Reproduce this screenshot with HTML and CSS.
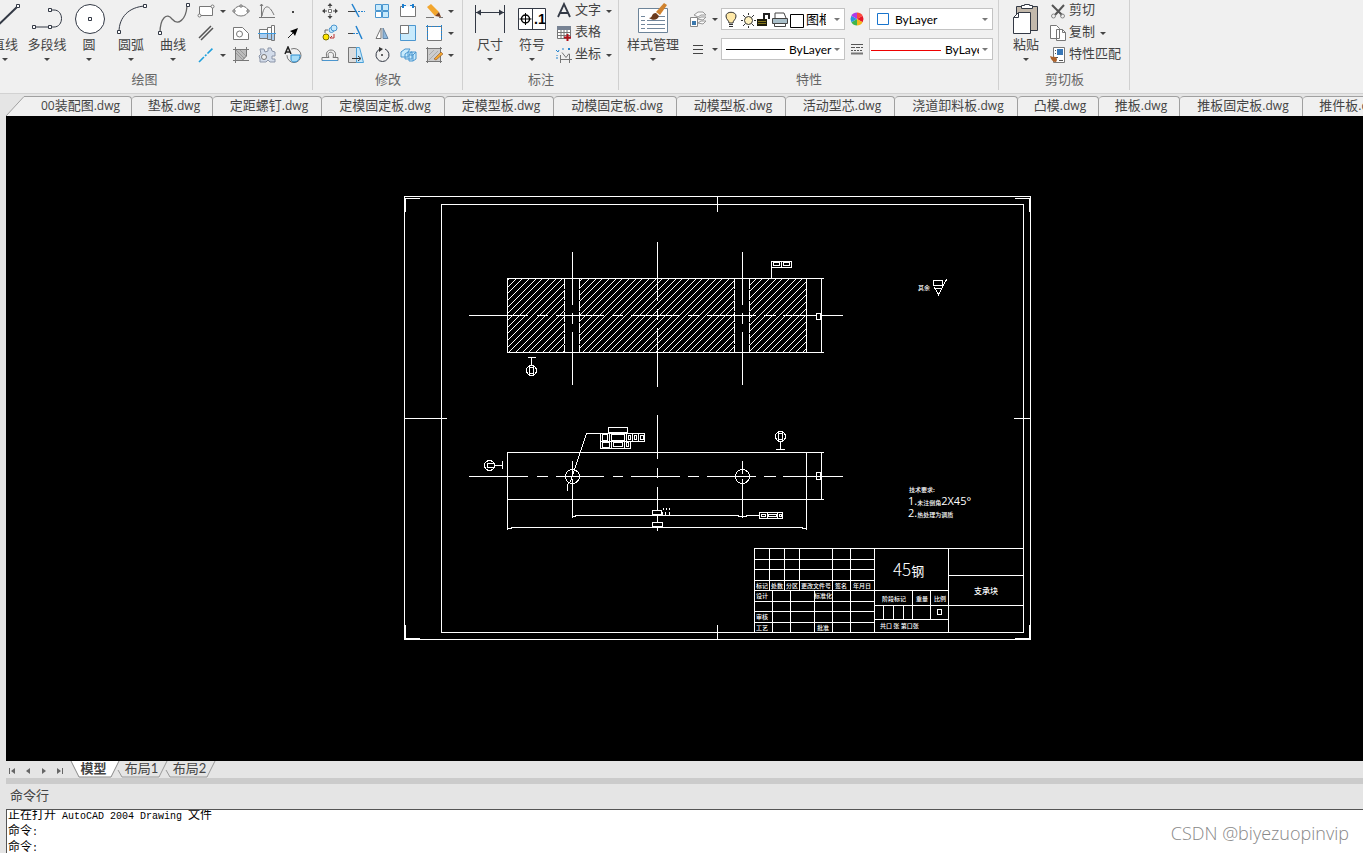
FILE: index.html
```html
<!DOCTYPE html>
<html lang="zh-CN">
<head>
    <meta charset="UTF-8">
    <meta name="viewport" content="width=device-width, initial-scale=1.0">
    <title>支承块.dwg</title>
    <link rel="stylesheet" href="styles.css">
</head>
<body>
    <header class="ribbon">
        <section class="group group-draw">
            <div class="tools">
                <button class="big">
                    <svg width="34" height="34" viewBox="0 0 34 34"><path d="M3 30 29 5" stroke="#333945" stroke-width="2"/><path class="node" d="M28.500 2.500h3v3h-3z"/></svg>
                    <span>直线</span><i class="arrow"></i>
                </button>
                <button class="big">
                    <svg width="34" height="34" viewBox="0 0 34 34"><path class="dark" d="M4 25h16M20 8h4c10 0 10 17 0 17h-4"/><path class="node" d="M2.500 23.500h3v3h-3zM18.500 23.500h3v3h-3zM18.500 6.500h3v3h-3z"/></svg>
                    <span>多段线</span><i class="arrow"></i>
                </button>
                <button class="big">
                    <svg width="34" height="34" viewBox="0 0 34 34"><circle class="dark white" cx="18" cy="17" r="14.500"/><path class="node" d="M16.500 15.500h3v3h-3z"/></svg>
                    <span>圆</span><i class="arrow"></i>
                </button>
                <button class="big">
                    <svg width="34" height="34" viewBox="0 0 34 34"><path class="dark" d="M5 30C5 15 15 5 31 4"/><path class="node" d="M3.500 28.500h3v3h-3zM29.500 2.500h3v3h-3z"/></svg>
                    <span>圆弧</span><i class="arrow"></i>
                </button>
                <button class="big">
                    <svg width="34" height="34" viewBox="0 0 34 34"><path d="M4 31C4 16 11 10 16 17c6 7 14 1 15-13" stroke="#666" stroke-width="1.300"/><path class="node" d="M2.500 29.500h3v3h-3zM30.500 1.500h3v3h-3z"/></svg>
                    <span>曲线</span><i class="arrow"></i>
                </button>
                <div class="grid grid-draw">
                    <button aria-label="矩形"><svg width="18" height="18" viewBox="0 0 18 18"><path class="gray white" d="M2.500 4.500h13v9h-13z"/><circle class="gray white" cx="2.500" cy="13.500" r="1.500"/><circle class="gray white" cx="15.500" cy="4.500" r="1.500"/></svg></button>
                    <i class="arrow"></i>
                    <button aria-label="椭圆"><svg width="18" height="18" viewBox="0 0 18 18"><ellipse class="gray white" cx="9" cy="9" rx="7" ry="5"/><path class="gray white" d="M1 8h2v2H1zM15 8h2v2h-2zM8 3h2v2H8z"/></svg></button>
                    <button aria-label="函数曲线"><svg width="18" height="18" viewBox="0 0 18 18"><path class="gray" d="M3.500 2v13.500H17M1 15.500h3M2 4l1.500-2L5 4M4 14C6 2 11 2 16 13"/></svg></button>
                    <button aria-label="点"><svg width="18" height="18" viewBox="0 0 18 18"><path d="M8 9h2v2H8z" fill="#444"/></svg></button>

                    <button aria-label="双线"><svg width="18" height="18" viewBox="0 0 18 18"><path d="M2 14 14 2M4 16 16 4" stroke="#555" stroke-width="1.500"/></svg></button>
                    <span></span>
                    <button aria-label="面域"><svg width="18" height="18" viewBox="0 0 18 18"><path class="gray white" d="M1.500 3.500h9l6 6v6h-15z"/><circle class="gray" cx="7.500" cy="10" r="3"/></svg></button>
                    <button aria-label="轴"><svg width="18" height="18" viewBox="0 0 18 18"><path class="gray white" d="M1.500 5.500h8v9h-8zM9.500 3.500h4v12h-4zM13.500 1.500h3v15h-3z"/><path d="M2 10h7v4H2zM10 10h3v5h-3zM14 10h2v6h-2z" fill="#a9cdf0"/><path d="M0 9.500h18" stroke="#3d9be0"/></svg></button>
                    <button aria-label="箭头"><svg width="18" height="18" viewBox="0 0 18 18"><path d="M4 14 10 8" stroke="#222"/><path d="M14 4 11 12 9 9 6 7z" fill="#000"/></svg></button>

                    <button aria-label="中心线"><svg width="18" height="18" viewBox="0 0 18 18"><path d="M2 16 16 2" stroke="#1fa0dd" stroke-width="1.600" stroke-dasharray="7 1.500 2 1.500"/></svg></button>
                    <i class="arrow"></i>
                    <button aria-label="填充"><svg width="18" height="18" viewBox="0 0 18 18"><path d="M3.500 3.500h11v7l-4 4h-7z" fill="#bcbcbc"/><path class="gray" d="M3.500 1v16M14.500 1v9l-5 5M1 3.500h16M1 14.500h16"/><path d="m4 7 7 7M4 4l9 9M8 4l6 6" stroke="#999"/></svg></button>
                    <button aria-label="齿轮"><svg width="18" height="18" viewBox="0 0 18 18"><path d="M2 3h4l1 3 3-1V2h3l1 3 3 1v4h-3v3h3v3h-5l-2-2-2 2H2v-3l-1-3 2-2z" fill="#d3dcea" stroke="#8b95a8"/><circle cx="6" cy="11" r="2.500" fill="#f0f0f0" stroke="#777"/></svg></button>
                    <button aria-label="文字旋转"><svg width="18" height="18" viewBox="0 0 18 18"><circle class="gray" cx="10" cy="9.500" r="7"/><path d="M7 9h9c0 5-3 7-6 7-2 0-3-1-3-3z" fill="#a6dcf7" stroke="#2b8ccf"/><path d="M0 0h7v9H0z" fill="#f0f0f0"/><path d="m1 8 3-7 3 7M2 6h4" stroke="#222" stroke-width="1.500"/></svg></button>
                </div>
            </div>
            <h2>绘图</h2>
        </section>

        <section class="group group-modify">
            <div class="tools">
                <div class="grid grid-modify">
                    <button aria-label="移动"><svg width="18" height="18" viewBox="0 0 18 18"><path class="gray white" d="M7.500 7.500h3v3h-3z"/><path d="M9 1 6.500 4h5zM9 17l-2.500-3h5zM1 9l3-2.500v5zM17 9l-3-2.500v5z" fill="#444"/><path d="M9 3v3M9 12v3M3 9h3M12 9h3" stroke="#444"/></svg></button>
                    <button aria-label="修剪"><svg width="18" height="18" viewBox="0 0 18 18"><path d="M1 9.500h9" stroke="#444"/><path d="M11 9.500h7" stroke="#2383cf" stroke-dasharray="2 1"/><path d="m5 2 7 13" stroke="#2383cf" stroke-width="1.500"/></svg></button>
                    <button aria-label="阵列"><svg width="18" height="18" viewBox="0 0 18 18"><path class="blue sky" d="M2.500 2.500h6v6h-6zM9.500 2.500h6v6h-6zM9.500 9.500h6v6h-6z"/><path class="blue white" d="M2.500 9.500h6v6h-6z"/></svg></button>
                    <button aria-label="打断"><svg width="18" height="18" viewBox="0 0 18 18"><path class="gray white" d="M5 4.500H1.500v10h15v-10H13"/><path d="M4 2v4M14 2v4" stroke="#1d7fd0" stroke-width="2"/><path d="M5 3.500h2M11 3.500h2" stroke="#1d7fd0"/></svg></button>
                    <button aria-label="删除"><svg width="18" height="18" viewBox="0 0 18 18"><path d="M2 5 6 2l8 8-4 4z" fill="#f2a62e"/><path d="M10 14l4-4 2 5z" fill="#7d3f1b"/><path d="M1 15.500h8M14 15.500h4" stroke="#777"/></svg></button>
                    <i class="arrow"></i>

                    <button aria-label="复制"><svg width="18" height="18" viewBox="0 0 18 18"><circle class="blue sky" cx="10.500" cy="6" r="2.500"/><circle class="blue sky" cx="13" cy="4" r="3"/><circle cx="5" cy="13" r="3" fill="#ffe600" stroke="#776c00"/><path d="M9 14h4v-4M9 14l2-2" stroke="#b33"/><path d="M4 9V6h3" stroke="#666"/></svg></button>
                    <button aria-label="延伸"><svg width="18" height="18" viewBox="0 0 18 18"><path d="M1 9.500h5" stroke="#444"/><path d="M6 9.500h6" stroke="#2383cf" stroke-dasharray="2 1"/><path d="m9 2 6 13" stroke="#2383cf" stroke-width="1.500"/></svg></button>
                    <button aria-label="镜像"><svg width="18" height="18" viewBox="0 0 18 18"><path class="gray white" d="M8 4v10.500H3z"/><path d="M10 4v10.500h5z" fill="#8db7dd" stroke="#6685a3"/></svg></button>
                    <button aria-label="缩放"><svg width="18" height="18" viewBox="0 0 18 18"><path class="blue sky" d="M1.500 1.500h15v15h-15z"/><path class="gray white" d="M1.500 1.500h8v8h-8z"/></svg></button>
                    <button aria-label="拉伸"><svg width="18" height="18" viewBox="0 0 18 18"><path class="gray white" d="M2.500 2.500h14v14h-14z"/><path d="M1 2.500h16M2.500 1v15M16.500 1v15" stroke="#2383cf" stroke-dasharray="2 1"/></svg></button>
                    <i class="arrow"></i>

                    <button aria-label="偏移"><svg width="18" height="18" viewBox="0 0 18 18"><path class="blue" d="M1 14.500h16"/><path class="gray" d="M1 14.500v-3h5c-4-10 12-10 8 0h3v3M4 11.500h4c-4-7 7-7 4 0h4"/></svg></button>
                    <button aria-label="拔模"><svg width="18" height="18" viewBox="0 0 18 18"><path class="gray" fill="#ddd" d="M1.500 1.500h8v15h-8z"/><path d="M9.500 1.500h3l4 15h-7z" fill="#c5e7fb" stroke="#4aa0d8"/><path d="M5 12.500h8M11 10l3 2.500-3 2.500" stroke="#333"/></svg></button>
                    <button aria-label="旋转"><svg width="18" height="18" viewBox="0 0 18 18"><path class="dark" d="M7 3a6.500 6.500 0 1 0 5 0"/><path d="M6 1v5l4-3z" fill="#333"/><circle cx="9" cy="9" r="1" fill="#333"/></svg></button>
                    <button aria-label="分解"><svg width="18" height="18" viewBox="0 0 18 18"><path class="blue sky" d="M2 6l4-3h5l-2 3v5H2zM6 8l3-2h4v7H6zM12 6h5v7l-3 2h-4V9z"/><path class="blue" d="M10 9h4v6M14 9l3-3"/></svg></button>
                    <button aria-label="编辑填充"><svg width="18" height="18" viewBox="0 0 18 18"><path d="M3 3h12v12H3z" fill="#ccc"/><path d="m4 9 5-5M4 14 13 5" stroke="#aaa"/><path class="gray" d="M2.500 1v16M15.500 1v16M1 2.500h16M1 15.500h16"/><path d="m9 13 7-7 2 2-7 6z" fill="#f2a62e" stroke="#7d3f1b" stroke-width=".5"/></svg></button>
                    <i class="arrow"></i>
                </div>
            </div>
            <h2>修改</h2>
        </section>

        <section class="group group-note">
            <div class="tools">
                <button class="big">
                    <svg width="34" height="34" viewBox="0 0 34 34"><path class="dark" d="M2.500 3v28M31.500 3v28M3 10.500h28"/><path d="m3 10.500 5-3v6zM31 10.500l-5-3v6z" fill="#333945"/></svg>
                    <span>尺寸</span><i class="arrow"></i>
                </button>
                <button class="big">
                    <svg width="34" height="34" viewBox="0 0 34 34"><path class="dark white" d="M3.500 6.500h27v21h-27zM17.500 7v20"/><circle cx="10.500" cy="17" r="4" stroke="#000" stroke-width="1.500"/><path d="M10.500 11v12M4.500 17h12" stroke="#000"/><text class="tolerance" x="19" y="22">.1</text></svg>
                    <span>符号</span><i class="arrow"></i>
                </button>
                <div class="rows">
                    <button class="row"><svg width="18" height="18" viewBox="0 0 18 18"><path d="M3 15 9 2l6 13M5 11h8" stroke="#333945" stroke-width="1.800"/></svg><span>文字</span><i class="arrow"></i></button>
                    <button class="row"><svg width="18" height="18" viewBox="0 0 18 18"><path class="gray white" d="M2.500 2.500h13v12h-13zM2.500 8.500h13M2.500 11.500h13M6 5v10M9 5v10M12 5v10"/><path d="M2 2h14v4H2z" fill="#778293"/><path d="M9 13.500h7M12.500 10v7" stroke="#b1121b" stroke-width="2"/></svg><span>表格</span></button>
                    <button class="row"><svg width="18" height="18" viewBox="0 0 18 18"><path class="gray" d="M5.500 9v8M5 13.500h12M7 6.500l4 5 3-4M14.500 8v9"/><path d="M1 4l2 2 1-2M1 12h2M8 2v2M13 2l2 2M15 2l-2 2M2 9v1" stroke="#2383cf"/></svg><span>坐标</span><i class="arrow"></i></button>
                </div>
            </div>
            <h2>标注</h2>
        </section>

        <section class="group group-props">
            <div class="tools">
                <button class="big wide">
                    <svg width="34" height="34" viewBox="0 0 34 34"><path d="M2.500 6.500h29v24h-29z" fill="#fff" stroke="#6d8499"/><path d="M5 14.500h4M5 18.500h4M5 22.500h4M5 26.500h4M11 18.500h18M11 22.500h18M11 26.500h18M22 14.500h7" stroke="#71869b"/><path d="M13 16c4 0 2-5 7-5l3 3c-1 4-6 5-10 2z" fill="#6b3a1c"/><path d="m20 10 8-9 3 2-7 10z" fill="#d0832f"/></svg>
                    <span>样式管理</span><i class="arrow"></i>
                </button>
                <div class="props">
                    <button aria-label="图层"><svg width="18" height="18" viewBox="0 0 18 18"><path d="m5 5 4-3h5l3 3h-5l-3 2zM8 9l4-2h5l-3 3zM9 13l3-2h5l-3 3z" fill="#f8f8f8" stroke="#999"/><path d="M1.500 7.500h7v9h-7z" fill="#fff" stroke="#888"/><path d="M3 11h4v4H3z" fill="#3b78ad"/></svg></button>
                    <i class="arrow"></i>
                    <div class="combo">
                        <svg class="layer-icons" width="84" height="19" viewBox="0 0 84 19">
                            <path d="M7 13c0-3-3-3-3-7 0-5 10-5 10 0 0 4-3 4-3 7z" fill="#ffe9a8" stroke="#333"/><path d="M7 14.500h4M7 16.500h4" stroke="#333"/>
                            <circle cx="26.500" cy="10.500" r="4" fill="#fff2bf" stroke="#333"/><path d="M26.500 3v2M26.500 16v2M19 10.500h2M32 10.500h2M21 5l2 2M30 14l2 2M32 5l-2 2M23 14l-2 2" stroke="#333"/>
                            <path d="M35 9h10v7H35z" fill="#1c1b0b"/><path d="M36 11.500h8M36 13.500h8" stroke="#85771c"/><path d="M42 9V4h5v5" stroke="#222" stroke-width="2"/>
                            <path d="M53 8V3h9l2 5" fill="#fff" stroke="#444"/><path d="M50.500 8.500h15v5h-15z" fill="#a9bfc9" stroke="#444"/><path d="M52.500 13.500h11v3h-11z" fill="#fff" stroke="#444"/>
                            <path d="M68.500 4.500h13v13h-13z" fill="#fff" stroke="#000"/>
                        </svg>
                        <select class="layer" aria-label="当前图层"><option>图框</option></select>
                        <i class="arrow"></i>
                    </div>
                    <button aria-label="颜色"><svg width="18" height="18" viewBox="0 0 18 18"><path d="M9 9V2.500A6.500 6.500 0 0 1 14.600 5.800z" fill="#ff4a3d"/><path d="M9 9l5.600-3.200a6.500 6.500 0 0 1 0 6.400z" fill="#e81728"/><path d="M9 9l5.600 3.200A6.500 6.500 0 0 1 9 15.500z" fill="#f4b61a"/><path d="M9 9v6.500a6.500 6.500 0 0 1-5.600-3.300z" fill="#3fb54b"/><path d="m9 9-5.600 3.200a6.500 6.500 0 0 1 0-6.400z" fill="#2795dd"/><path d="M9 9 3.400 5.800A6.500 6.500 0 0 1 9 2.500z" fill="#b03ce8"/></svg></button>
                    <div class="combo">
                        <svg width="22" height="19" viewBox="0 0 22 19"><path d="M7.500 3.500h11v11h-11z" fill="#fff" stroke="#1874cd"/></svg>
                        <select class="color" aria-label="颜色"><option>ByLayer</option></select>
                        <i class="arrow"></i>
                    </div>

                    <button aria-label="线宽"><svg width="18" height="18" viewBox="0 0 18 18"><path d="M4 5.500h10M4 9.500h10M4 13.500h10" stroke="#444"/></svg></button>
                    <i class="arrow"></i>
                    <div class="combo">
                        <svg width="64" height="19" viewBox="0 0 64 19"><path d="M4 9.500h59" stroke="#000"/></svg>
                        <select class="line" aria-label="线型"><option>ByLayer</option></select>
                        <i class="arrow"></i>
                    </div>
                    <button aria-label="线型管理"><svg width="18" height="18" viewBox="0 0 18 18"><path d="M3 4.500h12" stroke="#555"/><path d="M3 7.500h12" stroke="#555" stroke-dasharray="4 1"/><path d="M3 10.500h12" stroke="#555" stroke-dasharray="2 1"/><path d="M3 13.500h12" stroke="#777" stroke-width="2"/></svg></button>
                    <div class="combo">
                        <svg width="72" height="19" viewBox="0 0 72 19"><path d="M1 10.500h70" stroke="#e00"/></svg>
                        <select class="weight" aria-label="线宽"><option>ByLayer</option></select>
                        <i class="arrow"></i>
                    </div>
                </div>
            </div>
            <h2>特性</h2>
        </section>

        <section class="group group-clip">
            <div class="tools">
                <button class="big">
                    <svg width="34" height="34" viewBox="0 0 34 34"><path d="M7.500 4.500h21v24h-21z" fill="#c2b8ab" stroke="#333945"/><path class="dark white" d="M12.500 6.500v-3h3v-1h5v1h3v3z"/><path class="dark white" d="M9.500 10.500h12v21h-17v-16z"/><path class="dark" d="M9.500 10.500v5h-5"/></svg>
                    <span>粘贴</span><i class="arrow"></i>
                </button>
                <div class="rows">
                    <button class="row"><svg width="18" height="18" viewBox="0 0 18 18"><path d="m3 3 10 10M15 3 6 13" stroke="#555" stroke-width="2"/><circle cx="4.500" cy="14" r="2" stroke="#888"/><circle cx="13.500" cy="14" r="2" stroke="#888"/></svg><span>剪切</span></button>
                    <button class="row"><svg width="18" height="18" viewBox="0 0 18 18"><path class="gray white" d="M1.500 1.500h6l3 3v10h-9zM7.500 5.500h6l3 3v8h-9z"/><path class="gray" d="M13.500 5.500v3h3"/></svg><span>复制</span><i class="arrow"></i></button>
                    <button class="row"><svg width="18" height="18" viewBox="0 0 18 18"><path class="gray white" d="M4.500 1.500h11v15h-11z"/><path d="M8 3h6v6H8z" fill="#3777b8"/><path d="M6 11.500h3M6 4.500h1M6 7.500h1M10 14.500h4" stroke="#555"/><path d="m1 10 3 1c4-1 5 3 3 5-3 0-5-2-6-6z" fill="#ae622a"/></svg><span>特性匹配</span></button>
                </div>
            </div>
            <h2>剪切板</h2>
        </section>
    </header>

    <nav class="files">
        <svg class="slope" width="20" height="20" viewBox="0 0 20 20"><path d="M0 20 18 0h2v20z" fill="#f0f0f0"/><path d="M0 20 18 .5h2" stroke="#a0a0a0"/></svg>
        <a href="#" class="first"><span>00</span>装配图<span>.dwg</span></a>
        <a href="#" class="n2">垫板<span>.dwg</span></a>
        <a href="#" class="n4">定距螺钉<span>.dwg</span></a>
        <a href="#" class="n5">定模固定板<span>.dwg</span></a>
        <a href="#" class="n4">定模型板<span>.dwg</span></a>
        <a href="#" class="n5">动模固定板<span>.dwg</span></a>
        <a href="#" class="n4">动模型板<span>.dwg</span></a>
        <a href="#" class="n4">活动型芯<span>.dwg</span></a>
        <a href="#" class="n5">浇道卸料板<span>.dwg</span></a>
        <a href="#" class="n2">凸模<span>.dwg</span></a>
        <a href="#" class="n2">推板<span>.dwg</span></a>
        <a href="#" class="n5">推板固定板<span>.dwg</span></a>
        <a href="#" class="n3">推件板<span>.dwg</span></a>
    </nav>

    <main class="canvas">
        <svg class="drawing" width="100%" height="100%">
            <defs>
                <clipPath id="cut">
                    <path d="M507 278h57v74h-57zM579 278h155v74H579zM749 278h57v74h-57z"/>
                </clipPath>
            </defs>
            <g transform="translate(-5.500 -115.500)">
                <!-- sheet frame -->
                <path d="M404 196h626v443H404zM441 204h582v428H441z"/>
                <path d="M405 211v-13h14M1015 198h14v13M405 625v13h14M1015 638h14v-13M717 196v15M717 625v14M404 418h42M1014 418h16"/>

                <!-- section view -->
                <path id="hatch" clip-path="url(#cut)"/>
                <path d="M507 278h316M507 352h316M507 278v74M806 278v74M821 278v74"/>
                <path class="hidden-edge" d="M564 278v74M579 278v74M734 278v74M749 278v74"/>
                <path d="M572 252v52M572 313v10M572 332v52M742 252v52M742 313v10M742 332v52M657 242v58M657 309v10M657 328v58"/>
                <path d="M469 315h58M537 315h10M556 315h47M613 315h9M631 315h48M688 315h10M707 315h48M764 315h11M783 315h59"/>
                <path class="solid" d="M816 313h4v6h-4z"/>
                <path d="M771 278v-17h20v6h-20M773 262h6v3h-6zM781 261v6M783 262h6v3h-6z"/>
                <path d="M528 357h7M531 357v8M529 367h4v6h-4z"/>
                <circle cx="531" cy="370" r="5"/>

                <!-- front view -->
                <path d="M507 452h316M507 499h316M507 452v77M806 452v77M821 452v47"/>
                <path d="M507 528h4v-1h291v1h4M572 461v12M572 479v38M572 516h3v-1h163v1h8v-1h13M742 461v12M742 479v38"/>
                <path d="M657 415v43M657 468v9M657 487v43"/>
                <path d="M469 476h58M537 476h10M556 476h47M613 476h9M631 476h48M688 476h10M707 476h48M764 476h11M783 476h59"/>
                <circle cx="572" cy="476" r="7"/>
                <circle cx="742" cy="476" r="7"/>
                <path d="M567 490v-6l3-3 16-48h14"/>
                <path d="M608 427h19v5h-19zM600 433h44v8h-44zM600 441h30v7h-30zM602 434h5v6h-5zM611 434h13v6h-13zM628 435h2v4h-2zM634 435h2v4h-2zM640 435h3v4h-3zM609 433v15M626 433v8M632 433v8M638 433v8M602 442h7v5h-7zM613 442h9v4h-9zM611 441v7M624 441v7M626 442h2v4h-2z"/>
                <path d="M487 463h7v4h-7zM494 465h8M502 461v7"/>
                <circle cx="489" cy="465" r="5"/>
                <path d="M778 433h4v6h-4zM780 441v8M776 449h8"/>
                <circle cx="780" cy="436" r="5"/>
                <path class="solid" d="M816 472h4v7h-4zM816 476h4M652 510h9v4h-9zM652 522h10v4h-10z"/>
                <path d="M663 508v1M662 512v2M666 508v1M665 512v2M669 508v1M669 512v2"/>
                <path class="solid" d="M759 512h23v6h-23z"/>
                <path d="M761 514h4v2h-4zM767 512v6M768 514h8v2h-8zM777 512v6M779 514h2v2h-2z"/>

                <!-- surface finish -->
                <path d="M933 280h9v5h-9zM934 287l4 7 8-15M934 288h7"/>

                <!-- title block -->
                <path d="M754 632v-84h269M754 559h120M754 569h120M754 580h120M754 590h194M754 601h120M754 611h120M754 622h120M769 548v42M784 548v42M799 548v42M832 548v84M850 548v84M772 590v42M790 590v42M814 590v42"/>
                <path d="M874 548v84M948 548v84M874 605h149M874 619h74M948 575h75M912 590v29M930 590v29M883 605v14M893 605v14M903 605v14M937 609h4v5h-4z"/>
            </g>
            <g class="labels" transform="translate(-6 -116)">
                <text x="918" y="290">其余</text>
                <text x="909" y="492">技术要求:</text>
                <text x="908" y="505"><tspan class="num">1.</tspan>未注倒角<tspan class="num">2X45°</tspan></text>
                <text x="908" y="517"><tspan class="num">2.</tspan>热处理为调质</text>
                <text x="756" y="588">标记</text>
                <text x="771" y="588">处数</text>
                <text x="786" y="588">分区</text>
                <text x="801" y="588">更改文件号</text>
                <text x="835" y="588">签名</text>
                <text x="853" y="588">年月日</text>
                <text x="756" y="598">设计</text>
                <text x="814" y="598">标准化</text>
                <text x="756" y="619">审核</text>
                <text x="756" y="630">工艺</text>
                <text x="817" y="630">批准</text>
                <text x="882" y="601">阶段标记</text>
                <text x="916" y="601">重量</text>
                <text x="934" y="601">比例</text>
                <text x="880" y="628">共口 张 第口张</text>
                <text class="material" x="893" y="576"><tspan>45</tspan>钢</text>
                <text class="part" x="974" y="594">支承块</text>
            </g>
        </svg>
    </main>

    <nav class="layouts">
        <div class="pager">
            <button aria-label="第一个"><svg width="8" height="8" viewBox="0 0 8 8"><path d="M1 1h1v6H1zM7 1v6L3 4z"/></svg></button>
            <button aria-label="上一个"><svg width="8" height="8" viewBox="0 0 8 8"><path d="M6 1v6L2 4z"/></svg></button>
            <button aria-label="下一个"><svg width="8" height="8" viewBox="0 0 8 8"><path d="M2 1v6l4-3z"/></svg></button>
            <button aria-label="最后一个"><svg width="8" height="8" viewBox="0 0 8 8"><path d="M6 1h1v6H6zM1 1v6l4-3z"/></svg></button>
        </div>
        <a href="#" class="active"><svg width="52" height="17" viewBox="0 0 52 17"><path d="M0 0 8 16h32l8-16" fill="#fff" stroke="#888"/></svg><span>模型</span></a>
        <a href="#"><svg width="52" height="17" viewBox="0 0 52 17"><path d="M-1 9 3 16h37l8-16" stroke="#999"/></svg><span>布局1</span></a>
        <a href="#"><svg width="52" height="17" viewBox="0 0 52 17"><path d="M-1 9 3 16h37l8-16" stroke="#999"/></svg><span>布局2</span></a>
    </nav>

    <section class="command">
        <h2>命令行</h2>
        <div class="log">
            <p>正在打开<span> AutoCAD 2004 Drawing </span>文件</p>
            <p>命令<span>:</span></p>
            <p>命令<span>:</span></p>
        </div>
    </section>
    <div class="watermark">CSDN @biyezuopinvip</div>

    <script>
        // section lining, 45 degrees, three lines to every 20 units
        const hatch = document.getElementById("hatch");
        let d = "";
        for (let i = 0; i < 56; i++) {
            const x = 435 + Math.round(i * 20 / 3);
            d += "M" + x + " 352l74-74";
        }
        hatch.setAttribute("d", d);
    </script>
</body>
</html>
```

FILE: styles.css
```css
* {
    box-sizing: border-box;
}
body {
    font-family: "Lato", "Noto Sans CJK SC", sans-serif;
    font-size: 13px;
    color: #444;
    margin: 0;
    height: 100vh;
    display: flex;
    flex-direction: column;
    overflow: hidden;
    background: #e5e5e5;
}
svg {
    display: block;
    flex: none;
    fill: none;
}
button {
    font: inherit;
    color: inherit;
    background: none;
    border: none;
    padding: 0;
    display: flex;
    align-items: center;
    justify-content: center;
    white-space: nowrap;
}
h2 {
    font-size: 13px;
    font-weight: normal;
    margin: 0;
}
a {
    color: inherit;
    text-decoration: none;
}

/* icon strokes */
.dark { stroke: #333945; }
.gray { stroke: #777; }
.blue { stroke: #4b96cf; }
.white { fill: #fff; }
.sky { fill: #c8eafc; }
.node { fill: #fff; stroke: #333945; }
.tolerance {
    font: bold 14px "Liberation Sans", sans-serif;
    fill: #000;
}
.arrow {
    border: 3px solid transparent;
    border-top-color: #444;
    border-bottom: none;
    justify-self: center;
}

/* ribbon */
.ribbon {
    display: flex;
    flex: none;
    background: #f0f0f0;
    border-bottom: 1px solid #d2d2d2;
}
.group {
    flex: none;
    position: relative;
    overflow: hidden;
}
.group::after {
    content: "";
    position: absolute;
    top: 0;
    right: 0;
    width: 1px;
    height: 90px;
    background: #d0d0d0;
}
.group h2 {
    line-height: 27px;
    text-align: center;
    color: #666;
}
.group-draw { width: 313px; }
.group-draw h2 { padding-right: 24px; }
.group-modify { width: 150px; }
.group-note { width: 156px; }
.group-props { width: 380px; }
.group-clip { width: 131px; }
.tools {
    display: flex;
    height: 66px;
}
.group-draw .tools { margin-left: -16px; }
.group-modify .tools { padding-left: 4px; }
.group-note .tools, .group-clip .tools { padding-left: 6px; }
.group-props .tools { padding-left: 8px; }
.big {
    flex: none;
    width: 42px;
    flex-direction: column;
    justify-content: flex-start;
    padding-top: 2px;
}
.big span {
    line-height: 16px;
    margin-bottom: 6px;
}
.wide { width: 52px; }
.grid {
    display: grid;
    grid-auto-rows: 22px;
    align-items: center;
}
.grid-draw { grid-template-columns: 24px 10px 26px 26px 26px; }
.grid-modify { grid-template-columns: repeat(5, 26px) 8px; }
.rows {
    display: grid;
    grid-auto-rows: 22px;
}
.row { justify-content: flex-start; padding-left: 2px; }
.row span {
    line-height: 18px;
    margin: 0 5px 4px 2px;
}
.props {
    display: grid;
    grid-template-columns: 22px 12px 124px 24px 124px;
    grid-auto-rows: 22px;
    gap: 8px 0;
    padding: 8px 0 0 8px;
    align-items: center;
}
.combo {
    display: flex;
    align-items: center;
    height: 22px;
    background: #fff;
    border: 1px solid #c3c3c3;
    padding-right: 4px;
    position: relative;
    overflow: hidden;
}
.combo .arrow { margin-left: auto; border-top-color: #777; }
.combo select {
    appearance: none;
    border: none;
    background: none;
    padding: 0;
    font: 12px "Lato", "Noto Sans CJK SC", sans-serif;
    color: #000;
    width: 46px;
    overflow: hidden;
    text-overflow: clip;
}
.combo .layer { width: 20px; font-size: 13px; }
.combo .color { margin-left: 3px; width: 60px; }
.combo .line { margin-left: 3px; }
.combo .weight { margin-left: 3px; width: 34px; }

/* open drawings */
.files {
    display: flex;
    flex: none;
    align-items: flex-end;
    height: 22px;
    padding-left: 6px;
    overflow: hidden;
}
.files a {
    flex: none;
    height: 20px;
    line-height: 17px;
    text-align: center;
    padding-left: 4px;
    background: #f0f0f0;
    border: 1px solid #a0a0a0;
    border-width: 1px 1px 0 0;
    border-radius: 4px 4px 0 0;
}
.files .first {
    width: 106px;
    border-top-left-radius: 0;
}
.files a span {
    font: 12px "Open Sans", sans-serif;
    line-height: 17px;
}
.n2 { width: 81px; }
.n3 { width: 95px; }
.n4 { width: 109px; }
.n5 { width: 123px; }

/* drawing area */
.canvas {
    flex: 1;
    min-height: 0;
    margin-left: 6px;
    background: #000;
}
.drawing {
    stroke: #fff;
    stroke-linecap: square;
    shape-rendering: crispEdges;
}
.hidden-edge {
    stroke-linecap: butt;
    stroke-dasharray: 10 1;
}
.solid { fill: #000; }
.labels {
    stroke: none;
    fill: #fff;
    font: 500 6px "Noto Sans CJK SC", sans-serif;
}
.num { font: 11px "Open Sans", sans-serif; }
.part { font-size: 8px; }
.material { font-size: 13px; font-weight: normal; }
.material tspan { font: 300 17px "Noto Sans CJK SC", sans-serif; }

/* model and layout tabs */
.layouts {
    display: flex;
    flex: none;
    height: 17px;
    padding-left: 4px;
}
.pager {
    display: flex;
    flex: none;
    width: 67px;
    padding: 2px 3px 0 0;
}
.pager button { width: 16px; }
.pager svg { fill: #666; }
.layouts a {
    position: relative;
    width: 48px;
    padding-right: 3px;
    text-align: center;
    line-height: 15px;
}
.layouts a svg {
    position: absolute;
    top: 0;
    left: 0;
    overflow: visible;
}
.layouts a span { position: relative; }
.active { font-weight: bold; }

/* command line */
.command { flex: none; margin-left: 6px; border-top: 6px solid #cbcbcb; }
.command h2 {
    line-height: 22px;
    height: 25px;
    padding-left: 4px;
}
.log {
    display: flex;
    flex-direction: column;
    justify-content: flex-end;
    height: 44px;
    overflow: hidden;
    background: #fff;
    border: 1px solid #555;
    border-width: 1px 0 0 1px;
    color: #000;
    font: 12px "Noto Sans CJK SC", sans-serif;
}
.log p {
    margin: 0;
    flex: none;
    height: 16px;
    line-height: 18px;
    padding-left: 1px;
    white-space: pre;
}
.log span { font: 10px "Liberation Mono", monospace; }
.watermark {
    position: absolute;
    right: 14px;
    bottom: 8px;
    font: 300 18px "Open Sans", sans-serif;
    line-height: 24px;
    color: #888;
}
```
